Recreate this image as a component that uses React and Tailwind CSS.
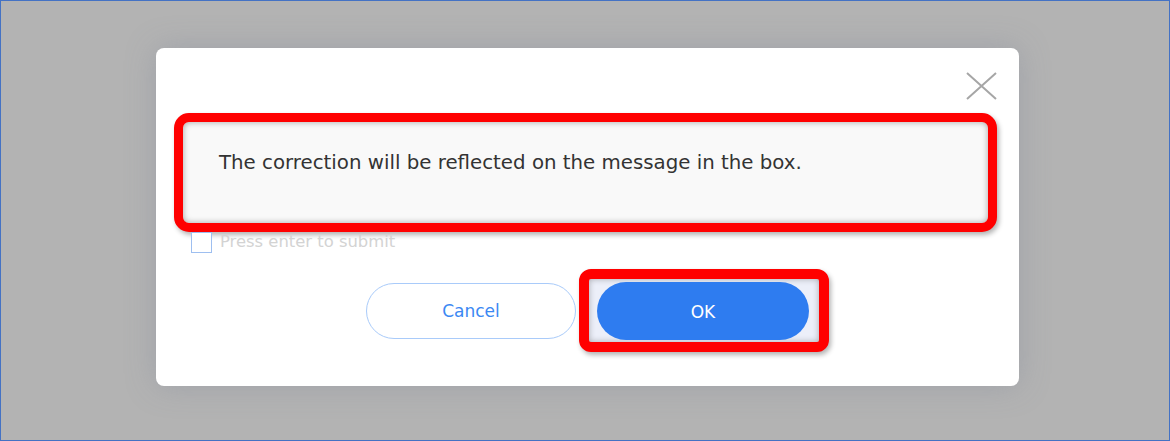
function CloseIcon() {
  return (
    <svg width="31" height="28" viewBox="0 0 31 28" className="block">
      <path d="M1 1 L30 27 M30 1 L1 27" stroke="#a6a6a6" strokeWidth="2" fill="none" />
    </svg>
  )
}

export default function App() {
  return (
    <div className="w-[1170px] h-[441px] border border-[#4472c4] bg-[#b3b3b3] pt-[47px] pl-[155px] font-['DejaVu_Sans',sans-serif]">
      <div className="w-[863px] h-[338px] bg-white rounded-[8px] shadow-[0_0_30px_rgba(120,130,150,0.35)] px-[18px] flex flex-col">
        {/* header */}
        <div className="h-[65px] pt-[24px] pr-[4px] flex justify-end">
          <CloseIcon />
        </div>

        {/* message box */}
        <div className="w-[823px] h-[119px] border-[9px] border-[#ff0000] rounded-[15px] bg-[#f9f9f9] shadow-[inset_0_0_6px_rgba(0,0,0,0.35),2px_3px_5px_rgba(0,0,0,0.3)] pl-[36px] pt-[28px]">
          <p className="text-[19.8px] leading-[26px] text-[#333]">
            The correction will be reflected on the message in the box.
          </p>
        </div>

        {/* checkbox */}
        <div className="h-[37px] flex items-start pl-[17px]">
          <span className="w-[21px] h-[21px] border border-[#9ebff0] bg-white" />
          <span className="ml-[8px] text-[16.4px] leading-[20px] text-[#d3d3d3]">Press enter to submit</span>
        </div>

        {/* buttons */}
        <div className="flex items-center pl-[192px]">
          <button className="w-[210px] h-[56px] rounded-full border border-[#a9cbfa] bg-white text-[#3b88f3] text-[17px] pt-[3px]">
            Cancel
          </button>
          <div className="ml-[3px] w-[250px] h-[83px] border-[10px] border-[#ff0000] rounded-[12px] bg-[#eceff9] shadow-[inset_0_0_6px_rgba(0,0,0,0.3),2px_3px_5px_rgba(0,0,0,0.3)] pl-[8px] pt-[3px]">
            <button className="w-[212px] h-[58px] rounded-full bg-[#2e7cf0] text-white text-[17px] pt-[3px]">
              OK
            </button>
          </div>
        </div>
      </div>
    </div>
  )
}
